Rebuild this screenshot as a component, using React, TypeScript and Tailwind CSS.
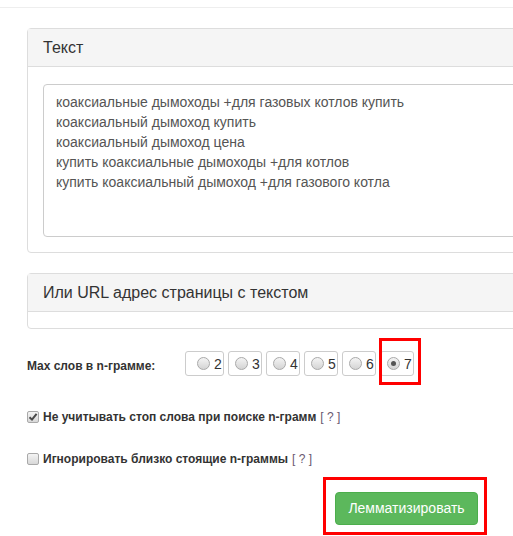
import React from 'react'

const lines = [
  'коаксиальные дымоходы +для газовых котлов купить',
  'коаксиальный дымоход купить',
  'коаксиальный дымоход цена',
  'купить коаксиальные дымоходы +для котлов',
  'купить коаксиальный дымоход +для газового котла',
]

const sizes = [2, 3, 4, 5, 6, 7]

function Radio({ checked }: { checked?: boolean }) {
  return (
    <span className="flex h-[13px] w-[13px] items-center justify-center rounded-full border border-[#a9a9a9] bg-gradient-to-b from-[#f4f4f4] to-[#d4d4d4]">
      {checked ? <span className="h-[5px] w-[5px] rounded-full bg-[#555]" /> : null}
    </span>
  )
}

function Checkbox({ checked }: { checked?: boolean }) {
  return (
    <span className="flex h-[12px] w-[12px] items-center justify-center rounded-[2px] border border-[#a9a9a9] bg-gradient-to-b from-[#f4f4f4] to-[#d8d8d8]">
      {checked ? (
        <svg width="10" height="10" viewBox="0 0 10 10">
          <path d="M1.5 5.2 L4 7.6 L8.6 1.8" fill="none" stroke="#4a4a4a" strokeWidth="2" />
        </svg>
      ) : null}
    </span>
  )
}

export default function App() {
  return (
    <div className="relative h-[536px] w-[513px] overflow-hidden bg-white font-['Liberation_Sans',Arial,sans-serif] text-[#333]">
      <div className="h-[8px] border-b border-[#eeeeee]" />

      <div className="ml-[27px] mt-[20px] w-[620px] rounded-[4px] border border-[#dddddd]">
        <div className="flex h-[38px] items-center border-b border-[#dddddd] bg-[#f5f5f5] px-[15px] text-[16px]">
          Текст
        </div>
        <div className="px-[15px] pb-[15px] pt-[17px]">
          <div className="h-[153px] w-[580px] rounded-[4px] border border-[#cccccc] px-[12px] py-[7px] text-[14px] leading-[20px] text-[#555]">
            {lines.map((line) => (
              <div key={line}>{line}</div>
            ))}
          </div>
        </div>
      </div>

      <div className="ml-[27px] mt-[20px] w-[620px] rounded-[4px] border border-[#dddddd]">
        <div className="flex h-[38px] items-center border-b border-[#dddddd] bg-[#f5f5f5] px-[15px] text-[16px]">
          Или URL адрес страницы с текстом
        </div>
        <div className="h-[16px]" />
      </div>

      <div className="mt-[22px] flex items-center pl-[27px]">
        <span className="w-[158px] pt-[4px] text-[12px] font-bold">Max слов в n-грамме:</span>
        <div className="flex gap-[4px]">
          {sizes.map((n, i) => (
            <div
              key={n}
              className={
                i === 0
                  ? 'flex h-[25px] w-[39px] items-center gap-[4px] rounded-[3px] border border-[#cccccc] pl-[11px] text-[14px]'
                  : 'flex h-[25px] w-[34px] items-center gap-[4px] rounded-[3px] border border-[#cccccc] pl-[6px] text-[14px]'
              }
            >
              <Radio checked={n === 7} />
              <span className="pt-[2px]">{n}</span>
            </div>
          ))}
        </div>
      </div>

      <div className="mt-[32px] flex items-center gap-[4px] pl-[27px] text-[12px]">
        <Checkbox checked />
        <span className="font-bold">Не учитывать стоп слова при поиске n-грамм</span>
        <span className="text-[#6a5870]">[ ? ]</span>
      </div>

      <div className="mt-[24px] flex items-center gap-[4px] pl-[27px] text-[12px]">
        <Checkbox />
        <span className="font-bold">Игнорировать близко стоящие n-граммы</span>
        <span className="text-[#6a5870]">[ ? ]</span>
      </div>

      <div className="mt-[24px] pl-[335px]">
        <button
          type="button"
          className="h-[33px] w-[143px] rounded-[4px] border border-[#4cae4c] bg-[#5cb85c] text-[14px] text-white"
        >
          Лемматизировать
        </button>
      </div>

      <div className="absolute left-[379px] top-[338px] h-[47px] w-[42px] border-[3px] border-[#ff0000]" />
      <div className="absolute left-[323px] top-[477px] h-[58px] w-[164px] border-[3px] border-[#ff0000]" />
    </div>
  )
}
